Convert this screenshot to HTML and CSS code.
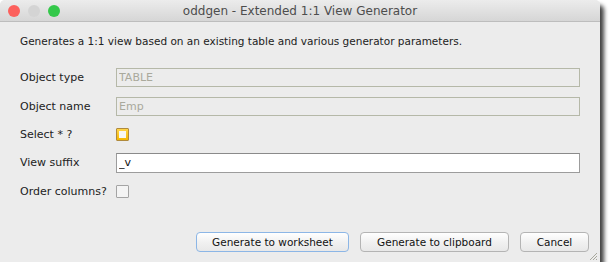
FILE: index.html
```html
<!DOCTYPE html>
<html lang="en">
<head>
    <meta charset="UTF-8">
    <title>oddgen - Extended 1:1 View Generator</title>
    <link rel="stylesheet" href="styles.css">
</head>
<body>
    <div class="window">
        <div class="titlebar">
            <div class="lights">
                <span class="light close"></span>
                <span class="light mini"></span>
                <span class="light zoom"></span>
            </div>
            <div class="title">oddgen - Extended 1:1 View Generator</div>
        </div>
        <div class="content">
            <p class="description">Generates a 1:1 view based on an existing table and various generator parameters.</p>
            <div class="form">
                <label>Object type</label>
                <input type="text" class="field" value="TABLE" disabled>
                <label>Object name</label>
                <input type="text" class="field" value="Emp" disabled>
                <label>Select * ?</label>
                <div><span class="check focused"><span class="check-inner"></span></span></div>
                <label>View suffix</label>
                <input type="text" class="field editable" value="_v">
                <label>Order columns?</label>
                <div><span class="check"></span></div>
            </div>
            <div class="buttons">
                <button class="default">Generate to worksheet</button>
                <button>Generate to clipboard</button>
                <button class="cancel">Cancel</button>
            </div>
        </div>
        <svg class="grip" width="9" height="9" viewBox="0 0 9 9">
            <path d="M8 1 L1 8 M8 4 L4 8 M8 7 L7 8" stroke="#a8a89c" stroke-width="1"/>
        </svg>
    </div>
</body>
</html>
```

FILE: styles.css
```css
body {
    margin: 0;
    background: #fff;
    font-family: "DejaVu Sans", sans-serif;
}
.window {
    position: relative;
    width: 600px;
    height: 262px;
    background: #ececec;
    border-radius: 5px 5px 0 0;
    box-shadow: 4px 5px 4px rgba(0, 0, 0, 0.75);
}
.titlebar {
    position: relative;
    height: 21px;
    border-bottom: 1px solid #bdbdbd;
    border-radius: 5px 5px 0 0;
    background: linear-gradient(#ececec, #d6d6d6);
    display: flex;
    align-items: center;
    justify-content: center;
}
.lights {
    position: absolute;
    left: 8px;
    top: 5px;
    display: flex;
    gap: 8px;
}
.light {
    width: 12px;
    height: 12px;
    border-radius: 50%;
}
.close { background: #fc605c; }
.mini { background: #d4d4d4; }
.zoom { background: #34c84a; }
.title {
    font-size: 12px;
    color: #4d4d4d;
}
.content {
    padding: 0 20px 0 20px;
}
.description {
    margin: 0;
    padding-top: 12px;
    line-height: 15px;
    font-size: 10.5px;
    color: #222;
}
.form {
    margin-top: 19px;
    display: grid;
    grid-template-columns: 96px 464px;
    grid-template-rows: 19px 19px 18px 20px 19px;
    row-gap: 9.5px;
    align-items: center;
}
.form label {
    font-size: 11px;
    color: #222;
}
.field {
    box-sizing: border-box;
    width: 464px;
    height: 100%;
    margin: 0;
    padding: 0 2px;
    font-family: "DejaVu Sans", sans-serif;
    font-size: 11px;
    border: 1px solid #b5b8a8;
    background: #ececec;
    color: #a9a99c;
}
.field.editable {
    background: #fff;
    color: #111;
    border: 1px solid #9c9c9c;
    border-top-color: #8a8a8a;
}
.check {
    box-sizing: border-box;
    display: flex;
    align-items: center;
    justify-content: center;
    width: 13px;
    height: 13px;
    border: 1px solid #a4a4a4;
    background: #f4f4f4;
    border-radius: 1px;
}
.check.focused {
    border-color: #b08a3c;
    background: linear-gradient(#ffd54a, #f5b800);
}
.check-inner {
    width: 7px;
    height: 7px;
    background: #f8f8f4;
}
.buttons {
    margin-top: 31px;
    display: flex;
    justify-content: flex-end;
    gap: 11px;
}
button {
    box-sizing: border-box;
    height: 20px;
    padding: 0;
    font-family: "DejaVu Sans", sans-serif;
    font-size: 10.5px;
    color: #111;
    border: 1px solid #b4b4b4;
    border-radius: 4px;
    background: linear-gradient(#ffffff, #f1f1f1 50%, #e8e8e8);
}
button.default {
    width: 153px;
    border-color: #8cb6e6;
}
button:nth-child(2) {
    width: 149px;
}
button.cancel {
    width: 69px;
    margin-right: -9px;
}
.grip {
    position: absolute;
    right: 2px;
    bottom: 1px;
}
```
